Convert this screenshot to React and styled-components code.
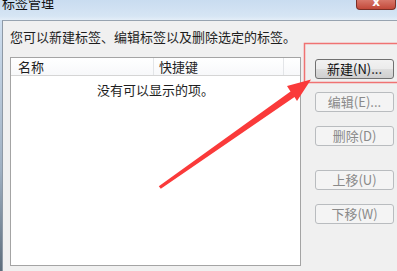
import styled, { createGlobalStyle } from "styled-components"

const GlobalStyle = createGlobalStyle`
  html, body {
    margin: 0;
    padding: 0;
    background: #f0f0f0;
  }
  * { box-sizing: border-box; }
`

const Window = styled.div`
    position: relative;
    width: 397px;
    height: 271px;
    overflow: hidden;
    display: flex;
    flex-direction: column;
    font-family: "Noto Sans CJK SC", "Liberation Sans", sans-serif;
    font-size: 13px;
    color: #1e1e1e;
    background: #cfdff0;
`

const TitleBar = styled.div`
    height: 20px;
    flex-shrink: 0;
    display: flex;
    justify-content: space-between;
    align-items: flex-start;
    background: linear-gradient(#c9dcf0, #d6e5f4 80%, #e4eef8);
`

const Title = styled.div`
    margin: -5px 0 0 2px;
    font-size: 13px;
    line-height: 15px;
    color: #111;
`

const CloseButton = styled.div`
    width: 40px;
    height: 10px;
    margin-right: 1px;
    border: 1px solid #7c2f26;
    border-top: none;
    border-radius: 0 0 4px 4px;
    background: linear-gradient(#d8776a, #c2493a);
    color: #fff;
    font: bold 12px "DejaVu Sans", sans-serif;
    line-height: 4px;
    text-align: center;
    overflow: hidden;
`

const Frame = styled.div`
    flex: 1;
    display: flex;
`

const LeftEdge = styled.div`
    width: 2px;
    background: linear-gradient(#cfdff0, #9fb0c2 60%, #5d6d7c);
`

const Client = styled.div`
    flex: 1;
    background: #f0f0f0;
    border-top: 1px solid #97a3b0;
    border-left: 1px solid #8e99a5;
    padding: 7px 0 0 7px;
`

const Hint = styled.div`
    line-height: 17px;
    margin-bottom: 12px;
    white-space: nowrap;
`

const MainRow = styled.div`
    display: flex;
    align-items: flex-start;
`

const ListBox = styled.div`
    width: 291px;
    height: 209px;
    background: #fff;
    border: 1px solid #a4a4a4;
    display: flex;
    flex-direction: column;
`

const ListHeader = styled.div`
    display: flex;
    height: 18px;
    border-bottom: 1px solid #d5d5d5;
    background: linear-gradient(#ffffff, #f7f8fa);
`

const HeaderCell = styled.div`
    width: ${p => p.$w}px;
    flex: ${p => (p.$w ? "none" : 1)};
    padding-left: ${p => p.$pad || 7}px;
    line-height: 17px;
    border-right: ${p => (p.$last ? "none" : "1px solid #e3e5e8")};
    white-space: nowrap;
`

const EmptyText = styled.div`
    margin-top: 5px;
    text-align: center;
    line-height: 17px;
`

const ButtonColumn = styled.div`
    display: flex;
    flex-direction: column;
    margin-left: 14px;
    padding-top: 2px;
`

const Button = styled.div`
    width: 79px;
    height: 20px;
    margin-top: ${p => p.$gap || 0}px;
    border: 1px solid ${p => (p.$disabled ? "#b9bcbf" : "#707070")};
    border-radius: 3px;
    background: ${p =>
      p.$disabled
        ? "#f4f4f4"
        : "linear-gradient(#f2f2f2 0%, #ebebeb 50%, #dddddd 51%, #cfcfcf 100%)"};
    color: ${p => (p.$disabled ? "#8a8a8a" : "#111")};
    text-align: center;
    line-height: 18px;
    white-space: nowrap;
`

const Overlay = styled.svg`
    position: absolute;
    left: 0;
    top: 0;
    pointer-events: none;
`

const Annotation = () => (
  <Overlay width="397" height="271" viewBox="0 0 397 271">
    <rect x="304.5" y="43.5" width="100" height="39" fill="none" stroke="#f07272" strokeWidth="1.5" />
    <polygon
      fill="#fa3a3a"
      points="158.8,186.3 160.8,188.7 294.5,97 297,101 311,79.5 287,86 290.5,91.5"
    />
  </Overlay>
)

const App = () => {
  return (
    <Window>
      <GlobalStyle />
      <TitleBar>
        <Title>标签管理</Title>
        <CloseButton>x</CloseButton>
      </TitleBar>
      <Frame>
        <LeftEdge />
        <Client>
          <Hint>您可以新建标签、编辑标签以及删除选定的标签。</Hint>
          <MainRow>
            <ListBox>
              <ListHeader>
                <HeaderCell $w={143}>名称</HeaderCell>
                <HeaderCell $w={130} $pad={5}>快捷键</HeaderCell>
                <HeaderCell $last />
              </ListHeader>
              <EmptyText>没有可以显示的项。</EmptyText>
            </ListBox>
            <ButtonColumn>
              <Button>新建(N)...</Button>
              <Button $disabled $gap={13}>编辑(E)...</Button>
              <Button $disabled $gap={14}>删除(D)</Button>
              <Button $disabled $gap={24}>上移(U)</Button>
              <Button $disabled $gap={14}>下移(W)</Button>
            </ButtonColumn>
          </MainRow>
        </Client>
      </Frame>
      <Annotation />
    </Window>
  )
}

export default App
